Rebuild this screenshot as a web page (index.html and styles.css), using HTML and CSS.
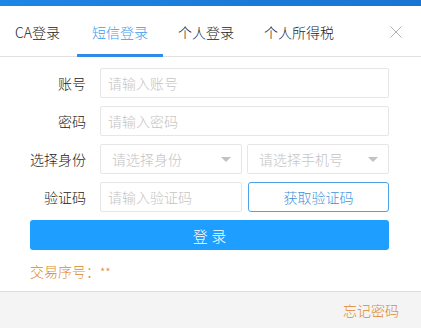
FILE: index.html
```html
<!DOCTYPE html>
<html lang="zh-CN">
<head>
<meta charset="utf-8">
<title>登录</title>
<link rel="stylesheet" href="styles.css">
</head>
<body>
<div class="window">
  <div class="topbar"></div>
  <div class="tabs">
    <div class="tab">CA登录</div>
    <div class="tab active">短信登录</div>
    <div class="tab">个人登录</div>
    <div class="tab">个人所得税</div>
    <div class="close">
      <svg width="12" height="12" viewBox="0 0 12 12"><path d="M0.5 0.5 L11.5 11.5 M11.5 0.5 L0.5 11.5" stroke="#b0b0b0" stroke-width="1" fill="none"/></svg>
    </div>
  </div>
  <div class="form">
    <div class="row">
      <label class="label">账号</label>
      <div class="input full">请输入账号</div>
    </div>
    <div class="row">
      <label class="label">密码</label>
      <div class="input full">请输入密码</div>
    </div>
    <div class="row">
      <label class="label">选择身份</label>
      <div class="pair">
        <div class="input select">请选择身份<span class="caret"></span></div>
        <div class="input select">请选择手机号<span class="caret"></span></div>
      </div>
    </div>
    <div class="row">
      <label class="label">验证码</label>
      <div class="pair">
        <div class="input">请输入验证码</div>
        <div class="btn-outline">获取验证码</div>
      </div>
    </div>
    <div class="btn-login">登 录</div>
    <div class="serial">交易序号：<span class="stars">**</span></div>
  </div>
  <div class="footer"><span>忘记密码</span></div>
</div>
</body>
</html>
```
FILE: styles.css
```css
* { box-sizing: border-box; }
html, body { margin: 0; padding: 0; background: #fff; }
body {
  font-family: "Noto Sans CJK SC", "Microsoft YaHei", sans-serif;
  font-size: 14px;
  font-weight: 300;
  color: #333;
  width: 421px;
  height: 328px;
  overflow: hidden;
}
.window { display: flex; flex-direction: column; height: 328px; }
.topbar {
  height: 6px;
  background: linear-gradient(to right, #1f86e6, #1b7ad8 60%, #1a75d2);
}
.tabs {
  display: flex;
  align-items: stretch;
  height: 51px;
  border-bottom: 1px solid #e2e2e2;
  position: relative;
}
.tab {
  padding: 0 15px;
  display: flex;
  align-items: center;
  color: #222;
  font-size: 14px;
  border-bottom: 3px solid transparent;
  margin-bottom: -1px;
  padding-top: 3px;
}
.tab:first-child { width: 77px; }
.tab.active { color: #3b9cef; border-bottom-color: #2d8de8; width: 86px; }
.close {
  margin-left: auto;
  margin-right: 19px;
  display: flex;
  align-items: center;
  padding-top: 2px;
}
.form {
  padding: 11px 32px 0 30px;
  display: flex;
  flex-direction: column;
  gap: 8px;
  flex: 1;
}
.row { display: flex; align-items: center; height: 30px; }
.label {
  width: 56px;
  text-align: right;
  margin-right: 14px;
  color: #222;
  font-size: 14px;
}
.input {
  height: 30px;
  border: 1px solid #e6e6e6;
  border-radius: 2px;
  padding: 0 7px;
  display: flex;
  align-items: center;
  color: #c4c4c4;
  font-size: 14px;
  background: #fff;
}
.full { flex: 1; }
.pair { flex: 1; display: grid; grid-template-columns: 1fr 1fr; gap: 5px; }
.select { padding-left: 11px; justify-content: space-between; padding-right: 10px; }
.caret {
  width: 0; height: 0;
  border-left: 5px solid transparent;
  border-right: 5px solid transparent;
  border-top: 5px solid #c2c2c2;
}
.btn-outline {
  height: 30px;
  border: 1px solid #4aa3e8;
  border-radius: 3px;
  display: flex;
  align-items: center;
  justify-content: center;
  color: #3c95dc;
  font-size: 14px;
  margin-left: 1px;
}
.btn-login {
  height: 30px;
  background: #1e9fff;
  border-radius: 3px;
  color: #fff;
  display: flex;
  align-items: center;
  justify-content: center;
  font-size: 15px;
}
.serial { color: #e0872a; font-size: 14px; margin-top: 3px; }
.stars { font-size: 12px; }
.footer {
  height: 37px;
  border-top: 1px solid #dedede;
  background: #f4f4f4;
  display: flex;
  align-items: center;
  justify-content: flex-end;
  padding-right: 22px;
  color: #e0872a;
  font-size: 14px;
}
```
